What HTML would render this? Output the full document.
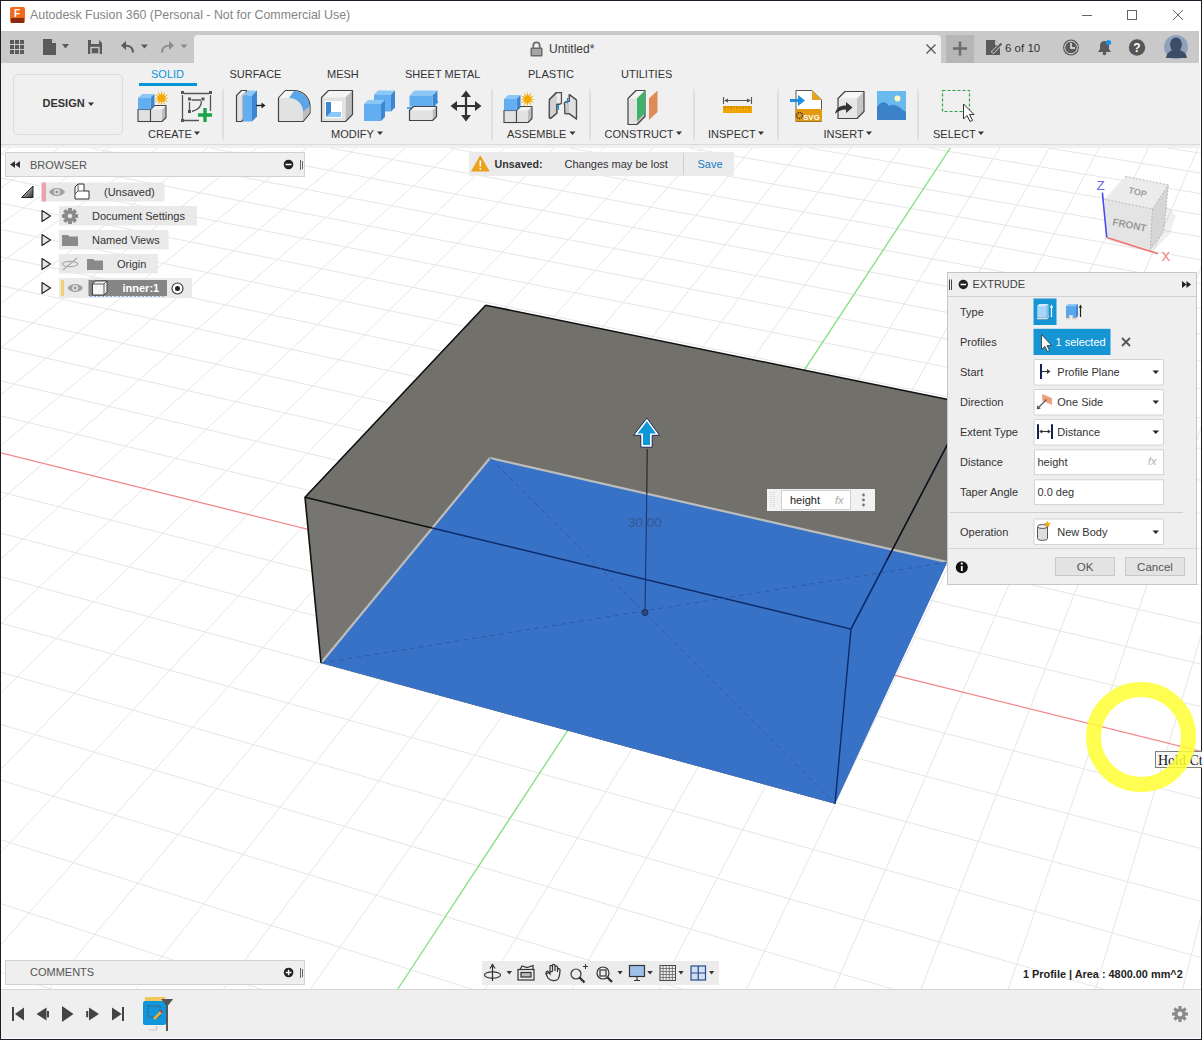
<!DOCTYPE html>
<html><head><meta charset="utf-8">
<style>
*{margin:0;padding:0;box-sizing:border-box}
html,body{width:1202px;height:1040px;overflow:hidden;background:#fff}
body{position:relative;font-family:"Liberation Sans",sans-serif;color:#3c3c3c}
.a{position:absolute}
.t{position:absolute;white-space:nowrap;line-height:1}
#vp{position:absolute;left:0;top:0;width:1202px;height:1040px}
</style></head><body>
<!-- viewport scene -->
<svg id="vp" width="1202" height="1040" viewBox="0 0 1202 1040">
<rect x="0" y="148" width="1202" height="842" fill="#ffffff"/>
<path d="M0.0 154.3L9.5 148.0M0.0 188.3L59.0 148.0M0.0 224.5L108.5 148.0M0.0 263.1L158.0 148.0M0.0 304.2L207.5 148.0M0.0 348.2L257.0 148.0M0.0 395.4L306.5 148.0M0.0 446.2L356.0 148.0M0.0 500.8L405.5 148.0M0.0 560.0L455.0 148.0M0.0 971.8L53.6 990.0M0.0 624.1L504.5 148.0M0.0 903.3L264.1 990.0M0.0 693.9L554.0 148.0M0.0 839.5L474.7 990.0M0.0 770.1L603.5 148.0M0.0 779.9L685.3 990.0M0.0 853.7L653.1 148.0M0.0 724.2L895.9 990.0M0.0 945.8L702.6 148.0M0.0 671.9L1106.5 990.0M48.3 990.0L752.1 148.0M0.0 622.8L1202.0 957.9M135.5 990.0L801.6 148.0M0.0 576.5L1202.0 901.8M222.7 990.0L851.2 148.0M0.0 532.9L1202.0 848.9M309.9 990.0L900.7 148.0M0.0 491.7L1202.0 799.0M484.4 990.0L999.8 148.0M0.0 415.7L1202.0 706.9M571.6 990.0L1049.3 148.0M0.0 380.7L1202.0 664.4M658.9 990.0L1098.9 148.0M0.0 347.4L1202.0 624.0M746.1 990.0L1148.4 148.0M0.0 315.7L1202.0 585.5M833.4 990.0L1198.0 148.0M0.0 285.5L1202.0 548.9M920.6 990.0L1202.0 265.2M0.0 256.7L1202.0 514.0M1007.9 990.0L1202.0 424.8M0.0 229.2L1202.0 480.7M1095.2 990.0L1202.0 632.2M0.0 202.9L1202.0 448.8M1182.4 990.0L1202.0 912.9M0.0 177.8L1202.0 418.3M0.0 153.7L1202.0 389.2M90.5 148.0L1202.0 361.2M210.2 148.0L1202.0 334.4M329.9 148.0L1202.0 308.6M449.6 148.0L1202.0 283.8M569.3 148.0L1202.0 260.0M689.0 148.0L1202.0 237.1M808.8 148.0L1202.0 215.0M928.6 148.0L1202.0 193.8M1048.3 148.0L1202.0 173.3M1168.1 148.0L1202.0 153.5" stroke="#e6e6e6" stroke-width="1" fill="none"/>
<path d="M-0.0 452.7L1202.0 751.7" stroke="#f08a8a" stroke-width="1.3"/><path d="M397.2 990.0L950.2 148.0" stroke="#7ee07e" stroke-width="1.3"/>
<!-- box -->
<polygon points="485.7,305.2 968.7,403.7 968.7,550 947.3,562.1 835,803.75 321,663 305,497.3" fill="#72706b"/>
<polygon points="305,497.3 851,629 835,803.75 321,663" fill="#767571"/>
<polygon points="490,458 947.3,562.1 835,803.75 321,663" fill="#3872c6"/>
<path d="M490,458 L947.3,562.1" stroke="#bdbdbd" stroke-width="2.2"/>
<path d="M490,458 L321,663" stroke="#bdbdbd" stroke-width="2.2"/>
<path d="M485.7,305.2 L968.7,403.7 M485.7,305.2 L305,497.3 L321,663 M305,497.3 L432,528" stroke="#111" stroke-width="1.6" fill="none"/>
<path d="M432,528 L851,629 L835,803.75 M851,629 L968.7,403.7" stroke="#0d2a6a" stroke-width="1.4" fill="none"/>
<path d="M851,629 L887,560" stroke="#0d2a6a" stroke-width="1.4"/>
<path d="M887,560 L968.7,403.7" stroke="#111" stroke-width="1.4"/>
<path d="M490,458 L835,803.75 M321,663 L947.3,562.1" stroke="#2a55a0" stroke-opacity="0.8" stroke-width="1" stroke-dasharray="5,4" fill="none"/>
</svg>

<!-- window border -->
<div class="a" style="left:0;top:0;width:1202px;height:1px;background:#1b1b2a"></div>
<div class="a" style="left:0;top:0;width:1px;height:1040px;background:#1b1b2a"></div>
<div class="a" style="left:1201px;top:0;width:1px;height:1040px;background:#1b1b2a"></div>
<div class="a" style="left:0;top:1039px;width:1202px;height:1px;background:#1b1b2a"></div>

<!-- title bar -->
<div class="a" style="left:1px;top:1px;width:1200px;height:30px;background:#fff"></div>
<div class="t" style="left:30px;top:9px;font-size:12.4px;color:#858585">Autodesk Fusion 360 (Personal - Not for Commercial Use)</div>

<!-- tab bar -->
<div class="a" style="left:1px;top:31px;width:1198px;height:32px;background:#c9c9c9"></div>
<div class="a" style="left:194px;top:35px;width:747px;height:28px;background:#f0f0f0;border-radius:4px 4px 0 0"></div>
<div class="a" style="left:946px;top:35px;width:28px;height:28px;background:#b6b6b6"></div>

<!-- toolbar -->
<div class="a" style="left:1px;top:63px;width:1199px;height:85px;background:#f0f0f0"></div>
<div class="a" style="left:1px;top:144px;width:1199px;height:1px;background:#dadada"></div>
<div class="a" style="left:13px;top:74px;width:110px;height:61px;border:1.5px solid #dcdcdc;border-radius:5px"></div>

<svg class="a" style="left:0;top:0" width="1202" height="150" viewBox="0 0 1202 150" font-family="Liberation Sans, sans-serif">
<!-- fusion app icon -->
<rect x="10" y="7" width="15" height="16" rx="2" fill="#f26a1b"/>
<rect x="11" y="18" width="13" height="5" fill="#8a2a10"/>
<text x="14" y="17" font-size="10" font-weight="bold" fill="#fff">F</text>
<!-- window controls -->
<path d="M1082 15.5H1092" stroke="#666" stroke-width="1"/>
<rect x="1127.5" y="10.5" width="9" height="9" fill="none" stroke="#666" stroke-width="1"/>
<path d="M1173 10L1183 20M1183 10L1173 20" stroke="#666" stroke-width="1"/>
<!-- tab bar icons -->
<g fill="#5a5a5a">
<rect x="10" y="40" width="4" height="4"/><rect x="15" y="40" width="4" height="4"/><rect x="20" y="40" width="4" height="4"/>
<rect x="10" y="45" width="4" height="4"/><rect x="15" y="45" width="4" height="4"/><rect x="20" y="45" width="4" height="4"/>
<rect x="10" y="50" width="4" height="4"/><rect x="15" y="50" width="4" height="4"/><rect x="20" y="50" width="4" height="4"/>
<path d="M43 39H52L56 43V55H43Z"/>
<path d="M62 44H69L65.5 48.5Z"/>
<path d="M88 40H99L102 43V54H88Z"/>
<path d="M141 44.5H148L144.5 48.5Z"/>
</g>
<path d="M52 39V43H56" fill="#c9c9c9"/>
<path d="M52.5 39.5V42.5H55.5" fill="none" stroke="#c9c9c9" stroke-width="1"/>
<rect x="91" y="40" width="8" height="4" fill="#c9c9c9"/>
<rect x="91" y="47.5" width="8" height="6.5" fill="none" stroke="#c9c9c9" stroke-width="1.4"/>
<path d="M133 52.5C133 47 130 45.5 124 45.5" fill="none" stroke="#5a5a5a" stroke-width="2.2"/>
<path d="M121 45.5L126 41V50Z" fill="#5a5a5a"/>
<path d="M162 52.5C162 47 165 45.5 171 45.5" fill="none" stroke="#8c8c8c" stroke-width="2.2"/>
<path d="M174 45.5L169 41V50Z" fill="#8c8c8c"/>
<path d="M180.5 44.5H187.5L184 48.5Z" fill="#8c8c8c"/>
<!-- doc tab -->
<rect x="530.5" y="47.5" width="12" height="9" rx="1" fill="#6a6a6a"/>
<path d="M533.3 48V45.5a3.2 3.2 0 0 1 6.4 0V48" fill="none" stroke="#6a6a6a" stroke-width="1.7"/>
<path d="M532 50H541M532 52H541M532 54H541" stroke="#f0f0f0" stroke-width="0.9"/>
<text x="549" y="53" font-size="12" fill="#3a3a3a">Untitled*</text>
<path d="M926.5 44.5L935.5 53.5M935.5 44.5L926.5 53.5" stroke="#555" stroke-width="1.3"/>
<path d="M953 48.5H967M960 41.5V55.5" stroke="#6e6e6e" stroke-width="2.6"/>
<!-- right tab icons -->
<path d="M986 40H995L1000 45V55H986Z" fill="#5a5a5a"/>
<path d="M995 40V45H1000" fill="#c9c9c9"/>
<path d="M992 53L1002 43" stroke="#c9c9c9" stroke-width="3.5"/>
<path d="M992.5 52.5L1001.5 43.5" stroke="#5a5a5a" stroke-width="2"/>
<text x="1005" y="52" font-size="11.5" fill="#333">6 of 10</text>
<circle cx="1071" cy="47.5" r="8" fill="#5a5a5a"/>
<circle cx="1071" cy="47.5" r="6.3" fill="none" stroke="#ddd" stroke-width="1"/>
<path d="M1071 43V48H1075" fill="none" stroke="#eee" stroke-width="1.4"/>
<path d="M1098 52H1111L1109 49V45.5A4.5 4.5 0 0 0 1100 45.5V49Z" fill="#5a5a5a"/>
<circle cx="1104.5" cy="53.5" r="1.8" fill="#5a5a5a"/>
<circle cx="1108.5" cy="42.5" r="2.6" fill="#1e90e0"/>
<circle cx="1137" cy="47.5" r="8.2" fill="#555"/>
<text x="1137" y="52" font-size="12" font-weight="bold" fill="#fff" text-anchor="middle">?</text>
<circle cx="1176" cy="47" r="12" fill="#8da1bd"/>
<path d="M1166 58C1167 52 1171 51 1172 50C1169 47 1169 38 1176 37.5C1183 38 1183 47 1180 50C1182 51 1186 52 1187 58Z" fill="#3e4d66"/>
<!-- toolbar tabs -->
<g font-size="11" fill="#333">
<text x="151" y="78" fill="#0696d7">SOLID</text>
<text x="229.5" y="78">SURFACE</text>
<text x="327" y="78">MESH</text>
<text x="405" y="78">SHEET METAL</text>
<text x="528" y="78">PLASTIC</text>
<text x="621" y="78">UTILITIES</text>
</g>
<rect x="139" y="83" width="58" height="3" fill="#0696d7"/>
<text x="42.5" y="107" font-size="11" font-weight="bold" fill="#333">DESIGN</text>
<path d="M88 102.5H94L91 106Z" fill="#333"/>
<!-- group labels -->
<g font-size="11" fill="#333">
<text x="148" y="137.5">CREATE</text>
<text x="331" y="137.5">MODIFY</text>
<text x="507" y="137.5">ASSEMBLE</text>
<text x="604.5" y="137.5">CONSTRUCT</text>
<text x="708" y="137.5">INSPECT</text>
<text x="823.5" y="137.5">INSERT</text>
<text x="933" y="137.5">SELECT</text>
</g>
<g fill="#333">
<path d="M194 131.5H200L197 135Z"/>
<path d="M377 131.5H383L380 135Z"/>
<path d="M569.5 131.5H575.5L572.5 135Z"/>
<path d="M676 131.5H682L679 135Z"/>
<path d="M758 131.5H764L761 135Z"/>
<path d="M866 131.5H872L869 135Z"/>
<path d="M978 131.5H984L981 135Z"/>
</g>
<!-- separators -->
<g stroke="#d6d6d6" stroke-width="1.2">
<path d="M223 89V140M492 89V140M590 89V140M694 89V140M778 89V140M918 89V140"/>
</g>
<rect x="138" y="109.5" width="12.5" height="12" fill="#e2e2e2" stroke="#444" stroke-width="1.1"/><polygon points="150.5,109.5 154.5,105.5 166.0,105.5 162.0,109.5" fill="#f4f4f4"/><polygon points="162.0,109.5 166.0,105.5 166.0,117.5 162.0,121.5" fill="#bdbdbd"/><rect x="150.5" y="109.5" width="11.5" height="12" fill="#e2e2e2"/><path d="M150.5,109.5 L154.5,105.5 L166.0,105.5 L166.0,117.5 L162.0,121.5 L150.5,121.5 Z" fill="none" stroke="#444" stroke-width="1.1" stroke-linejoin="round"/><polygon points="138,98 142,94 154.5,94 150.5,98" fill="#8cc8f7"/><polygon points="150.5,98 154.5,94 154.5,105.5 150.5,109.5" fill="#3f86d0"/><rect x="138" y="98" width="12.5" height="11.5" fill="#62aef0"/><polygon points="161.5,90.5 162.3,95.1 165.3,91.5 163.8,95.9 168.2,94.4 164.6,97.4 169.2,98.2 164.6,99.0 168.2,102.0 163.8,100.5 165.3,104.9 162.3,101.3 161.5,105.9 160.7,101.3 157.7,104.9 159.2,100.5 154.8,102.1 158.4,99.0 153.8,98.2 158.4,97.4 154.8,94.4 159.2,95.9 157.7,91.5 160.7,95.1" fill="#f5a800"/><g stroke="#555" stroke-width="1.3" fill="none"><path d="M184 93.5H209M182.5 95V119M184 120.5H199M210.5 95V111"/><path d="M191.5 100H201M189.5 102V110M192 111.5C198 110 201.5 106 201.5 101"/></g><g fill="#555"><rect x="181" y="91" width="3" height="3"/><rect x="209" y="91" width="3" height="3"/><rect x="181" y="119" width="3" height="3"/><rect x="188" y="97.5" width="3" height="3"/><rect x="201.5" y="97.5" width="3" height="3"/><rect x="188" y="110" width="3" height="3"/></g><path d="M205 108V122M198 115H212" stroke="#1aa34a" stroke-width="3.4"/><polygon points="236.5,95.5 241.5,90.5 246.5,90.5 241.5,95.5" fill="#f4f4f4"/><polygon points="241.5,95.5 246.5,90.5 246.5,116.5 241.5,121.5" fill="#bdbdbd"/><rect x="236.5" y="95.5" width="5" height="26" fill="#e2e2e2"/><path d="M236.5,95.5 L241.5,90.5 L246.5,90.5 L246.5,116.5 L241.5,121.5 L236.5,121.5 Z" fill="none" stroke="#444" stroke-width="1.2" stroke-linejoin="round"/><polygon points="243,95.5 248,90.5 257,90.5 252,95.5" fill="#8cc8f7"/><polygon points="252,95.5 257,90.5 257,116.5 252,121.5" fill="#3f86d0"/><rect x="243" y="95.5" width="9" height="26" fill="#62aef0"/><path d="M256 105.5H263" stroke="#222" stroke-width="1.4"/><path d="M265.5 105.5L261.5 102.5V108.5Z" fill="#222"/><path d="M278.5,121.5 V98 L285.5,90.5 H294 A16,16 0 0 1 310,106.5 V113 L303,121.5 Z" fill="#e2e2e2" stroke="#444" stroke-width="1.2" stroke-linejoin="round"/><polygon points="279,98 285.5,91 294,91 289,98" fill="#f4f4f4"/><path d="M294,91 A16,16 0 0 1 309.5,106.5 L303,112 A14,14 0 0 0 289,98 Z" fill="#5aa6e8"/><path d="M303,112 L309.5,106.5 V113 L303,121 Z" fill="#bdbdbd"/><polygon points="321.5,97.5 328.5,90.5 352.5,90.5 345.5,97.5" fill="#f4f4f4"/><polygon points="345.5,97.5 352.5,90.5 352.5,114.5 345.5,121.5" fill="#bdbdbd"/><rect x="321.5" y="97.5" width="24" height="24" fill="#e2e2e2"/><path d="M321.5,97.5 L328.5,90.5 L352.5,90.5 L352.5,114.5 L345.5,121.5 L321.5,121.5 Z" fill="none" stroke="#444" stroke-width="1.2" stroke-linejoin="round"/><rect x="325" y="101" width="17" height="17" fill="#fff"/><path d="M326 102H331V112H341V117H326Z" fill="#3f86d0"/><path d="M326 117L331 112H341V117Z" fill="#8cc8f7"/><polygon points="374,94.5 378,90.5 395,90.5 391,94.5" fill="#8cc8f7"/><polygon points="391,94.5 395,90.5 395,107.5 391,111.5" fill="#3f86d0"/><rect x="374" y="94.5" width="17" height="17" fill="#62aef0"/><polygon points="364,104 368,100 385,100 381,104" fill="#8cc8f7"/><polygon points="381,104 385,100 385,117 381,121" fill="#3f86d0"/><rect x="364" y="104" width="17" height="17" fill="#62aef0"/><polygon points="409.5,95.5 414.5,90.5 437.5,90.5 432.5,95.5" fill="#8cc8f7"/><polygon points="432.5,95.5 437.5,90.5 437.5,101.5 432.5,106.5" fill="#3f86d0"/><rect x="409.5" y="95.5" width="23" height="11" fill="#62aef0"/><path d="M407 108H432L438 101.5" fill="none" stroke="#1e8fe0" stroke-width="1.3"/><polygon points="409.5,110.5 413.5,106.5 436.5,106.5 432.5,110.5" fill="#f4f4f4"/><polygon points="432.5,110.5 436.5,106.5 436.5,116.5 432.5,120.5" fill="#bdbdbd"/><rect x="409.5" y="110.5" width="23" height="10" fill="#e2e2e2"/><path d="M409.5,110.5 L413.5,106.5 L436.5,106.5 L436.5,116.5 L432.5,120.5 L409.5,120.5 Z" fill="none" stroke="#444" stroke-width="1.2" stroke-linejoin="round"/><g fill="#333"><path d="M466 90.5L461 97H471Z M466 121.5L461 115H471Z M450.5 106L457 101V111Z M481.5 106L475 101V111Z"/></g><path d="M466 96V116M456 106H476" stroke="#333" stroke-width="2.2"/><rect x="504" y="110.5" width="12.5" height="12" fill="#e2e2e2" stroke="#444" stroke-width="1.1"/><polygon points="516.5,110.5 520.5,106.5 532.0,106.5 528.0,110.5" fill="#f4f4f4"/><polygon points="528.0,110.5 532.0,106.5 532.0,118.5 528.0,122.5" fill="#bdbdbd"/><rect x="516.5" y="110.5" width="11.5" height="12" fill="#e2e2e2"/><path d="M516.5,110.5 L520.5,106.5 L532.0,106.5 L532.0,118.5 L528.0,122.5 L516.5,122.5 Z" fill="none" stroke="#444" stroke-width="1.1" stroke-linejoin="round"/><polygon points="504,99 508,95 520.5,95 516.5,99" fill="#8cc8f7"/><polygon points="516.5,99 520.5,95 520.5,106.5 516.5,110.5" fill="#3f86d0"/><rect x="504" y="99" width="12.5" height="11.5" fill="#62aef0"/><polygon points="527.5,91.5 528.3,96.1 531.4,92.5 529.8,96.9 534.2,95.4 530.6,98.4 535.2,99.2 530.6,100.0 534.2,103.0 529.8,101.5 531.4,105.9 528.3,102.3 527.5,106.9 526.7,102.3 523.6,105.9 525.2,101.5 520.8,103.1 524.4,100.0 519.8,99.2 524.4,98.4 520.8,95.4 525.2,96.9 523.6,92.5 526.7,96.1" fill="#f5a800"/><path d="M549.3 99.5L556 92.6H561.5V103.2L559.5 104.3H556.8V113.3L550.5 118.5L549.3 117.5Z" fill="#d2d2d2" stroke="#505050" stroke-width="1.2" stroke-linejoin="round"/><path d="M556.5 92.8H561.3V103.3H556.8Z" fill="#ececec"/><path d="M549.5 99.6L556.6 92.7H561.4V103.3L559.5 104.3H556.8V113.3L550.5 118.5L549.3 117.5Z" fill="none" stroke="#505050" stroke-width="1.2" stroke-linejoin="round"/><path d="M569.3 94.6L576.5 100.1V119.1L568.9 113.6H565L564.4 103L566.5 101.5H569.3Z" fill="#e0e0e0" stroke="#505050" stroke-width="1.2" stroke-linejoin="round"/><path d="M564.8 103.5H569V113.3H564.8Z" fill="#c8c8c8"/><path d="M569.3 94.6L576.5 100.1V119.1L568.9 113.6H565L564.4 103L566.5 101.5H569.3Z" fill="none" stroke="#505050" stroke-width="1.2" stroke-linejoin="round"/><path d="M558.4 104.8V109.8M567.5 98V103.5" stroke="#0a8ee0" stroke-width="1.3"/><polygon points="628,98.5 636,90.5 645,90.5 637,98.5" fill="#f4f4f4"/><polygon points="637,98.5 645,90.5 645,116.5 637,124.5" fill="#bdbdbd"/><rect x="628" y="98.5" width="9" height="26" fill="#e2e2e2"/><path d="M628,98.5 L636,90.5 L645,90.5 L645,116.5 L637,124.5 L628,124.5 Z" fill="none" stroke="#444" stroke-width="1.2" stroke-linejoin="round"/><polygon points="637,98.5 645,90.5 645,113 637,121" fill="#3fb26a"/><polygon points="649,98.5 657.5,90.5 657.5,112 649,120" fill="#e08a55"/><rect x="723" y="106" width="29" height="7" fill="#f0a500"/><path d="M725 106V109M728 106V108M731 106V109M734 106V108M737 106V109M740 106V108M743 106V109M746 106V108M749 106V109" stroke="#b07000" stroke-width="0.8"/><path d="M723.5 97V104M751.5 97V104M726 100.5H749" stroke="#555" stroke-width="1.1"/><path d="M724 100.5L728 98.5V102.5Z M751 100.5L747 98.5V102.5Z" fill="#555"/><path d="M796 90.5H812L821.5 100V121.5H796Z" fill="#fff" stroke="#555" stroke-width="1"/><path d="M812 90.5V100H821.5Z" fill="#e8a21b"/><rect x="795.5" y="109" width="26.5" height="12.5" fill="#e39a10"/><text x="803" y="119.5" font-size="8" font-weight="bold" fill="#fff">SVG</text><circle cx="799.5" cy="115.5" r="3" fill="none" stroke="#333" stroke-width="1.5" stroke-dasharray="1.2,0.8"/><path d="M790 99H798V95L805 100.5L798 106V102H790Z" fill="#1e8fe0"/><polygon points="838,98.5 845,91.5 864,91.5 857,98.5" fill="#f6f6f6"/><polygon points="857,98.5 864,91.5 864,111.5 857,118.5" fill="#c6c6c6"/><rect x="838" y="98.5" width="19" height="20" fill="#e6e6e6"/><path d="M838,98.5 L845,91.5 L864,91.5 L864,111.5 L857,118.5 L838,118.5 Z" fill="none" stroke="#444" stroke-width="1.2" stroke-linejoin="round"/><path d="M835 114C836 108 840 105.5 846 105.5V102L852.5 107.5L846 113V109.5C841 109.5 838 111 835 114Z" fill="#333"/><rect x="877" y="91" width="29" height="29" fill="#6ab9ef"/><circle cx="897.5" cy="98.5" r="3" fill="#fff7c0"/><path d="M877 120V107C882 100 886 102 889 106C893 103 897 105 906 112V120Z" fill="#3b82c8"/><rect x="942.5" y="90.5" width="27" height="21" fill="none" stroke="#2aa34a" stroke-width="1.2" stroke-dasharray="3,2"/><path d="M963.5 104V119L967 115.5L970 121.5L972.5 120.3L969.5 114.5H974Z" fill="#fff" stroke="#333" stroke-width="1"/>
</svg>

<!-- manipulator & dimension -->
<svg class="a" style="left:0;top:0" width="1202" height="1040" viewBox="0 0 1202 1040" font-family="Liberation Sans, sans-serif">
<path d="M647.2 449L646.8 494" stroke="#222" stroke-width="1.1"/><path d="M646.8 494L645 612" stroke="#1d3570" stroke-width="1.1"/>
<circle cx="645" cy="612.5" r="3" fill="#2a4a80" stroke="#1a2f5a" stroke-width="1"/>
<text x="628" y="527" font-size="13.5" fill="#2f4f80" fill-opacity="0.75">30.00</text>
<path d="M646.9 418L633.6 435.3H640.8V447.2H652.2V435.3H659.6Z" fill="#fff" stroke="#1a2a5a" stroke-width="1" stroke-linejoin="miter"/>
<path d="M646.9 421.3L637.6 433.5H643V445H650V433.5H655.9Z" fill="#0d97d9"/>
<!-- height input -->
<rect x="767" y="489" width="108" height="22" fill="#f2f2f2"/>
<path d="M771 492V508M774 492V508" stroke="#c8c8c8" stroke-width="1" stroke-dasharray="1,1"/>
<rect x="781.5" y="490.5" width="69" height="19" fill="#fff" stroke="#cfcfcf"/>
<text x="790" y="503.5" font-size="11" fill="#222">height</text>
<text x="835" y="503.5" font-size="11" font-style="italic" fill="#aaa">fx</text>
<circle cx="863.5" cy="495" r="1.4" fill="#777"/><circle cx="863.5" cy="500" r="1.4" fill="#777"/><circle cx="863.5" cy="505" r="1.4" fill="#777"/>

<!-- view cube -->
<polygon points="1108,241 1152,252 1170,234 1176,215 1166,205" fill="#000" fill-opacity="0.06"/>
<polygon points="1104.6,199.2 1125.3,176.3 1168.4,185 1152.5,209" fill="#ececec"/>
<polygon points="1104.6,199.2 1152.5,209 1150.3,249.4 1106.7,237.4" fill="#e4e4e4"/>
<polygon points="1152.5,209 1168.4,185 1163.4,231.9 1150.3,249.4" fill="#d6d6d6"/>
<path d="M1125.3 176.3L1168.4 185L1163.4 231.9L1150.3 249.4M1152.5 209L1168.4 185M1152.5 209L1150.3 249.4M1104.6 199.2L1152.5 209" fill="none" stroke="#aaa" stroke-width="0.8" stroke-dasharray="2,1.5"/>
<text x="1128" y="193" font-size="9" font-weight="bold" fill="#a0a0a0" transform="rotate(14 1128 193)">TOP</text>
<text x="1112" y="225" font-size="10" font-weight="bold" fill="#999" transform="rotate(11 1112 225)">FRONT</text>
<path d="M1102.4 192.7L1106.7 237.4" stroke="#4a4af0" stroke-width="1.6"/>
<path d="M1106.7 237.4L1158 253.7" stroke="#f07070" stroke-width="1.6"/>
<text x="1096.5" y="189.5" font-size="13.5" fill="#6a6af0">Z</text>
<text x="1161.5" y="261" font-size="13" fill="#f07878">X</text>

</svg>

<!-- browser panel -->
<div class="a" style="left:5px;top:152px;width:300px;height:25px;background:#efefef;border:1px solid #d2d2d2"></div>
<svg class="a" style="left:0;top:145px" width="320" height="170" viewBox="0 145 320 170" font-family="Liberation Sans, sans-serif">
<path d="M10 164.5L15 161V168ZM15 164.5L20 161V168Z" fill="#333"/>
<text x="30" y="168.5" font-size="11" fill="#555">BROWSER</text>
<circle cx="288.5" cy="164.5" r="4.8" fill="#222"/><path d="M285.5 164.5H291.5" stroke="#fff" stroke-width="1.5"/>
<path d="M300.5 160V170M302.5 161V169" stroke="#444" stroke-width="0.8"/>
<!-- row1 -->
<defs><linearGradient id="tg" x1="0" y1="0" x2="1" y2="1"><stop offset="0" stop-color="#eee"/><stop offset="1" stop-color="#333"/></linearGradient></defs><path d="M21.5 197.5L33 186V197.5Z" fill="url(#tg)" stroke="#222" stroke-width="1"/>
<rect x="41.5" y="182.5" width="4.5" height="19" fill="#e9a3ad"/>
<rect x="46" y="182.5" width="118.5" height="19" fill="#e6e6e6" fill-opacity="0.85"/>
<path d="M49 192C52 186.5 62 186.5 65 192C62 197.5 52 197.5 49 192Z" fill="#a0a0a0"/><circle cx="57" cy="192" r="3" fill="#e8e8e8"/><circle cx="57" cy="192" r="1.7" fill="#a0a0a0"/>
<path d="M75 199V187L78 184H84V191H89V199Z" fill="#fff" stroke="#333" stroke-width="1"/>
<path d="M78 184V191H84M78 191L75 194" fill="none" stroke="#333" stroke-width="0.8"/>
<text x="104" y="196" font-size="11" fill="#333">(Unsaved)</text>
<!-- row2 -->
<path d="M42 210.5L50.5 216L42 221.5Z" fill="#e4e4e4" stroke="#222" stroke-width="1.2" stroke-linejoin="round"/>
<rect x="59" y="206" width="138" height="19.5" fill="#e6e6e6" fill-opacity="0.85"/>
<g transform="translate(70 216)" fill="#8a8a8a"><circle r="5.8"/><rect x="-1.9" y="-8" width="3.8" height="16"/><rect x="-1.9" y="-8" width="3.8" height="16" transform="rotate(45)"/><rect x="-1.9" y="-8" width="3.8" height="16" transform="rotate(90)"/><rect x="-1.9" y="-8" width="3.8" height="16" transform="rotate(135)"/><circle r="2.3" fill="#e6e6e6"/></g>
<text x="92" y="220" font-size="11" fill="#333">Document Settings</text>
<!-- row3 -->
<path d="M42 234.5L50.5 240L42 245.5Z" fill="#e4e4e4" stroke="#222" stroke-width="1.2" stroke-linejoin="round"/>
<rect x="59" y="230" width="109.5" height="19.5" fill="#e6e6e6" fill-opacity="0.85"/>
<path d="M62 235H68L69.5 236.5H78V246H62Z" fill="#8a8a8a"/>
<text x="92" y="244" font-size="11" fill="#333">Named Views</text>
<!-- row4 -->
<path d="M42 258.5L50.5 264L42 269.5Z" fill="#e4e4e4" stroke="#222" stroke-width="1.2" stroke-linejoin="round"/>
<rect x="59" y="254" width="99" height="19.5" fill="#e6e6e6" fill-opacity="0.85"/>
<path d="M62 264C64.5 260.5 75.5 260.5 78 264C75.5 267.5 64.5 267.5 62 264Z" fill="none" stroke="#aaa" stroke-width="1.2"/><path d="M63 270L77 258" stroke="#aaa" stroke-width="1.2"/>
<path d="M87 259H93L94.5 260.5H103V270H87Z" fill="#8a8a8a"/>
<text x="117" y="268" font-size="11" fill="#333">Origin</text>
<!-- row5 -->
<path d="M42 282.5L50.5 288L42 293.5Z" fill="#e4e4e4" stroke="#222" stroke-width="1.2" stroke-linejoin="round"/>
<rect x="59" y="278" width="133" height="20" fill="#e6e6e6" fill-opacity="0.85"/>
<rect x="61" y="280" width="3" height="16" fill="#f2cf6e"/>
<path d="M67.5 288C70.5 282.5 80 282.5 83 288C80 293.5 70.5 293.5 67.5 288Z" fill="#a0a0a0"/><circle cx="75.2" cy="288" r="3" fill="#e8e8e8"/><circle cx="75.2" cy="288" r="1.7" fill="#a0a0a0"/>
<rect x="88.5" y="280" width="78.5" height="16" fill="#858585"/>
<path d="M92.5 295V284L95.5 281H107V292L104 295Z" fill="#f4f4f4" stroke="#333" stroke-width="0.9"/>
<path d="M92.5 284H104V295M104 284L107 281" fill="none" stroke="#333" stroke-width="0.8"/>
<text x="122.5" y="292" font-size="11" font-weight="bold" fill="#fff">inner:1</text>
<path d="M90 296.5H166" stroke="#8ab4e8" stroke-width="1.2" stroke-dasharray="2,2"/>
<circle cx="177.5" cy="288.5" r="5.5" fill="#fff" stroke="#333" stroke-width="1.1"/><circle cx="177.5" cy="288.5" r="2.5" fill="#222"/>
</svg>

<!-- unsaved banner -->
<div class="a" style="left:469px;top:152px;width:265px;height:24px;background:#ebebeb"></div>
<div class="a" style="left:683px;top:153px;width:1px;height:22px;background:#cfcfcf"></div>
<svg class="a" style="left:460px;top:150px" width="280" height="30" viewBox="460 150 280 30" font-family="Liberation Sans, sans-serif">
<path d="M480.3 156.3L488.8 171H471.8Z" fill="#eba21c" stroke="#eba21c" stroke-width="1.2" stroke-linejoin="round"/>
<path d="M480.3 160.5V166.5" stroke="#fff" stroke-width="1.6"/><circle cx="480.3" cy="168.8" r="0.9" fill="#fff"/>
<text x="494.5" y="167.8" font-size="10.7" font-weight="bold" fill="#333">Unsaved:</text>
<text x="564.5" y="167.8" font-size="11" fill="#333">Changes may be lost</text>
<text x="697.5" y="167.8" font-size="11" fill="#1a7cc4">Save</text>
</svg>

<!-- extrude dialog -->
<div class="a" style="left:947px;top:272px;width:250px;height:313px;background:#efefef;border:1px solid #c6c6c6"></div>
<div class="a" style="left:948px;top:296px;width:248px;height:1px;background:#cfcfcf"></div>
<div class="a" style="left:950px;top:512px;width:233px;height:1px;background:#cfcfcf"></div>
<div class="a" style="left:948px;top:548px;width:248px;height:1px;background:#d6d6d6"></div>
<svg class="a" style="left:940px;top:265px" width="262" height="330" viewBox="940 265 262 330" font-family="Liberation Sans, sans-serif">
<path d="M949.5 279.5V290M951.5 279.5V290" stroke="#333" stroke-width="0.9"/>
<circle cx="963.3" cy="284.5" r="4.7" fill="#222"/><path d="M960.5 284.5H966" stroke="#fff" stroke-width="1.5"/>
<text x="972.5" y="288" font-size="11" fill="#444">EXTRUDE</text>
<path d="M1182 281L1186.5 284.5L1182 288ZM1186.5 281L1191 284.5L1186.5 288Z" fill="#222"/>
<g font-size="11" fill="#333">
<text x="960" y="315.8">Type</text>
<text x="960" y="345.6">Profiles</text>
<text x="960" y="375.7">Start</text>
<text x="960" y="405.6">Direction</text>
<text x="960" y="435.6">Extent Type</text>
<text x="960" y="466.2">Distance</text>
<text x="960" y="496.2">Taper Angle</text>
<text x="960" y="535.7">Operation</text>
</g>
<!-- type buttons -->
<rect x="1033.5" y="298.5" width="23" height="26.5" fill="#1595d3"/>
<polygon points="1037.2,306 1039.2,304 1048.7,304 1046.7,306" fill="#d4ebfb"/>
<polygon points="1046.7,306 1048.7,304 1048.7,315.5 1046.7,317.5" fill="#86c0ee"/>
<rect x="1037.2" y="306" width="9.5" height="11.5" fill="#a9d6f6"/>
<polygon points="1037,317.8 1047,317.8 1049,315.8 1049,316.8 1047.2,319.3 1037,319.3" fill="#f6dccb"/>
<path d="M1051.5 306.5V317" stroke="#fff" stroke-width="1.2"/><path d="M1049.8 307.8H1053.2L1051.5 304.6Z" fill="#fff"/>
<polygon points="1066,306 1068,304 1078,304 1076,306" fill="#8cc8f7"/>
<polygon points="1076,306 1078,304 1078,316 1076,318" fill="#3f86d0"/>
<path d="M1066 306H1076V318H1072.5V315H1069.5V318H1066Z" fill="#5aa6e8"/>
<path d="M1066 319H1069.5V316H1072.5V319H1076L1078 317" fill="none" stroke="#e8cfc0" stroke-width="1.1"/>
<path d="M1080.5 306.5V317" stroke="#222" stroke-width="1.2"/><path d="M1078.8 307.8H1082.2L1080.5 304.6Z" fill="#222"/>
<!-- profiles -->
<rect x="1033.5" y="328.8" width="77" height="26.2" fill="#1595d3"/>
<path d="M1041.5 334.5V349.5L1044.8 346.2L1047.5 351.5L1049.5 350.5L1047 345.5H1051.5Z" fill="#fff" stroke="#333" stroke-width="0.8"/>
<text x="1055.5" y="346" font-size="11" fill="#fff">1 selected</text>
<path d="M1122 338L1130 346M1130 338L1122 346" stroke="#555" stroke-width="1.8"/>
<!-- dropdowns -->
<g fill="#fff" stroke="#d4d4d4" stroke-width="1">
<rect x="1034" y="359.5" width="129.5" height="25.5" rx="1"/>
<rect x="1034" y="389.5" width="129.5" height="25.5" rx="1"/>
<rect x="1034" y="419.5" width="129.5" height="25.5" rx="1"/>
<rect x="1034.5" y="449.8" width="129" height="24.8"/>
<rect x="1034.5" y="479.8" width="129" height="24.8"/>
<rect x="1034" y="519" width="129.5" height="25.5" rx="1"/>
</g>
<g fill="#222">
<path d="M1152.5 370.5H1159L1155.8 374Z"/>
<path d="M1152.5 400.5H1159L1155.8 404Z"/>
<path d="M1152.5 430.5H1159L1155.8 434Z"/>
<path d="M1152.5 530.5H1159L1155.8 534Z"/>
</g>
<g font-size="11" fill="#333">
<text x="1057.3" y="375.6">Profile Plane</text>
<text x="1057.3" y="405.6">One Side</text>
<text x="1057.3" y="435.6">Distance</text>
<text x="1037.5" y="466.2">height</text>
<text x="1037.5" y="496.2">0.0 deg</text>
<text x="1057.3" y="535.7">New Body</text>
</g>
<text x="1148" y="465" font-size="11" font-style="italic" fill="#b0b0b0">fx</text>
<!-- start icon -->
<path d="M1041 364V379" stroke="#14224f" stroke-width="2"/><path d="M1042 371.5H1049" stroke="#333" stroke-width="1.1"/><path d="M1050.5 371.5L1047 369V374Z" fill="#333"/>
<!-- direction icon -->
<path d="M1042.2 394.1L1051.9 398.1V404.9L1042.2 400.5Z" fill="#eea07a"/>
<path d="M1037.5 408.5L1046.5 399.5" stroke="#555" stroke-width="1.1"/><path d="M1036.8 409.2L1037.2 405.2L1040.8 408.8Z" fill="#555"/>
<!-- extent icon -->
<path d="M1038 424.2V439M1052 424.2V439" stroke="#14224f" stroke-width="2"/><path d="M1040 431.5H1050" stroke="#333" stroke-width="1.1"/><path d="M1039.2 431.5L1042.2 429.5V433.5ZM1050.8 431.5L1047.8 429.5V433.5Z" fill="#333"/>
<!-- new body icon -->
<path d="M1037.5 526.5V538.5C1037.5 541 1047.5 541 1047.5 538.5V526.5" fill="#ddd" stroke="#555" stroke-width="1"/>
<ellipse cx="1042.5" cy="526.5" rx="5" ry="2" fill="#eee" stroke="#555" stroke-width="1"/>
<path d="M1047.5 520.5L1048.3 523L1051 523.3L1048.8 525L1049.5 527.5L1047.5 526L1045.5 527.5L1046.2 525L1044 523.3L1046.7 523Z" fill="#f5a800"/>
<!-- footer -->
<circle cx="961.8" cy="567.3" r="6" fill="#111"/><path d="M961.8 566V571" stroke="#fff" stroke-width="1.8"/><circle cx="961.8" cy="563.6" r="1.1" fill="#fff"/>
<rect x="1055.5" y="557.5" width="59" height="18" fill="#e3e3e3" stroke="#c9c9c9"/>
<rect x="1125.5" y="557.5" width="59" height="18" fill="#e3e3e3" stroke="#c9c9c9"/>
<text x="1085" y="571" font-size="11.5" fill="#555" text-anchor="middle">OK</text>
<text x="1155" y="571" font-size="11.5" fill="#555" text-anchor="middle">Cancel</text>
</svg>

<!-- hold ctrl tooltip -->
<div class="a" style="left:1155px;top:751px;width:47px;height:17px;background:#f6f6f6;border:1px solid #808080;border-right:none"></div>
<svg class="a" style="left:1080px;top:675px" width="122" height="125" viewBox="1080 675 122 125">
<text x="1158" y="764.5" font-family="Liberation Serif, serif" font-size="14" fill="#111">Hold Ctrl</text>
<circle cx="1141" cy="737" r="47.5" fill="none" stroke="#ffff33" stroke-opacity="0.85" stroke-width="15"/>
</svg>

<!-- comments panel -->
<div class="a" style="left:5px;top:960px;width:300px;height:25px;background:#efefef;border:1px solid #d2d2d2"></div>
<svg class="a" style="left:0;top:955px" width="1202" height="35" viewBox="0 955 1202 35" font-family="Liberation Sans, sans-serif">
<text x="30" y="976" font-size="11" fill="#555">COMMENTS</text>
<circle cx="288.6" cy="972.5" r="4.8" fill="#222"/><path d="M285.8 972.5H291.4M288.6 969.7V975.3" stroke="#fff" stroke-width="1.4"/>
<path d="M300.5 968V978M302.5 969V977" stroke="#444" stroke-width="0.8"/>
<text x="1023" y="977.6" font-size="10.9" font-weight="bold" fill="#222">1 Profile | Area : 4800.00 mm^2</text>
</svg>
<!-- nav bar -->
<div class="a" style="left:482px;top:961px;width:237px;height:24px;background:#ececec"></div>
<svg class="a" style="left:480px;top:958px" width="242" height="30" viewBox="480 958 242 30"><g fill="none" stroke="#333" stroke-width="1.2"><path d="M492.5 966V981M490 968.5L492.5 964.5L495 968.5"/><ellipse cx="492.5" cy="975" rx="8" ry="3.2"/><rect x="518" y="969.5" width="16" height="10.5"/><rect x="521" y="972.5" width="10" height="4.5" fill="#bbb"/><path d="M520 969.5L522 966L527 967.5L533 965.5V969.5"/><path d="M546 974L548 978C550 981 556 981.5 558 979C560 976 560 971 560 969.5C559 968 557.5 968.5 557.5 970V972M557.5 972V967C557 965.5 555 965.5 555 967V971M555 971V965.5C554.5 964 552.5 964 552.5 965.5V971M552.5 971V966.5C552 965 550 965 550 966.5V974L548.5 972C547.5 970.5 545.5 971.5 546 974Z"/><circle cx="576" cy="974" r="5"/><path d="M579.5 977.5L584.5 982.5" stroke-width="2.4"/><path d="M583 966.5H588M585.5 964V969" stroke-width="1"/><circle cx="603" cy="973" r="6"/><rect x="600" y="970" width="6" height="6"/><path d="M607.5 977.5L612 982" stroke-width="2.4"/></g><g fill="#333"><path d="M506.6 971H512L509.3 974.5Z"/><path d="M617.5 971H622.7L620.1 974.5Z"/><path d="M647.2 971H652.8L650 974.5Z"/><path d="M678.4 971H683.6L681 974.5Z"/><path d="M709 971H714.2L711.6 974.5Z"/></g><rect x="629.5" y="965.5" width="15" height="11" fill="#9cc0e8" stroke="#333" stroke-width="1.2"/><path d="M634 980.5H640M637 977V980" stroke="#333" stroke-width="1.2"/><rect x="660" y="965.5" width="15.5" height="15" fill="#eee" stroke="#444" stroke-width="1"/><path d="M663.1 965.5V980.5M666.2 965.5V980.5M669.3 965.5V980.5M672.4 965.5V980.5M660 968.5H675.5M660 971.5H675.5M660 974.5H675.5M660 977.5H675.5" stroke="#666" stroke-width="0.8"/><rect x="691" y="966" width="14.5" height="14" fill="#cfe0f5" stroke="#2a4a8a" stroke-width="1.2"/><path d="M698.25 966V980M691 973H705.5" stroke="#2a4a8a" stroke-width="1.2"/></svg>

<!-- timeline bar -->
<div class="a" style="left:1px;top:989px;width:1200px;height:1px;background:#d6d6d6"></div>
<div class="a" style="left:1px;top:990px;width:1199px;height:48px;background:#efefef"></div>
<svg class="a" style="left:0;top:984px" width="1202" height="56" viewBox="0 984 1202 56">
<g fill="#444">
<rect x="12" y="1007" width="2" height="14"/><path d="M15 1014L24 1007.5V1020.5Z"/>
<path d="M36.5 1014L46.5 1007.5V1020.5Z"/><rect x="47" y="1011" width="2" height="6.3"/>
<path d="M62 1006V1022L73.5 1014Z"/>
<rect x="86.2" y="1011" width="2" height="6.3"/><path d="M99 1014L89 1007.5V1020.5Z"/>
<path d="M112 1007.5V1020.5L121.7 1014Z"/><rect x="122" y="1007" width="2" height="14"/>
</g>
<rect x="145" y="997" width="20" height="5" fill="#f2c65a"/>
<rect x="143" y="1001" width="23" height="24" rx="2" fill="#0f96dc"/>
<rect x="148" y="1006" width="12" height="11" fill="none" stroke="#555" stroke-width="1" stroke-dasharray="2,1"/>
<path d="M154 1019L161 1012" stroke="#f0b030" stroke-width="2.5"/><circle cx="161.5" cy="1011.5" r="1.2" fill="#e03030"/>
<path d="M148.5 1030H156.5V1026" fill="none" stroke="#c8c8c8" stroke-width="1.2"/>
<path d="M161.2 999H173.1L168.5 1005H165.8Z" fill="#555"/><rect x="166" y="1004" width="2" height="27" fill="#555"/>
<g transform="translate(1180 1014)" fill="#8a8a8a">
<circle r="5.6"/>
<rect x="-1.6" y="-8" width="3.2" height="16"/><rect x="-1.6" y="-8" width="3.2" height="16" transform="rotate(45)"/><rect x="-1.6" y="-8" width="3.2" height="16" transform="rotate(90)"/><rect x="-1.6" y="-8" width="3.2" height="16" transform="rotate(135)"/>
<circle r="2.4" fill="#efefef"/>
</g>
</svg>
</body></html>
